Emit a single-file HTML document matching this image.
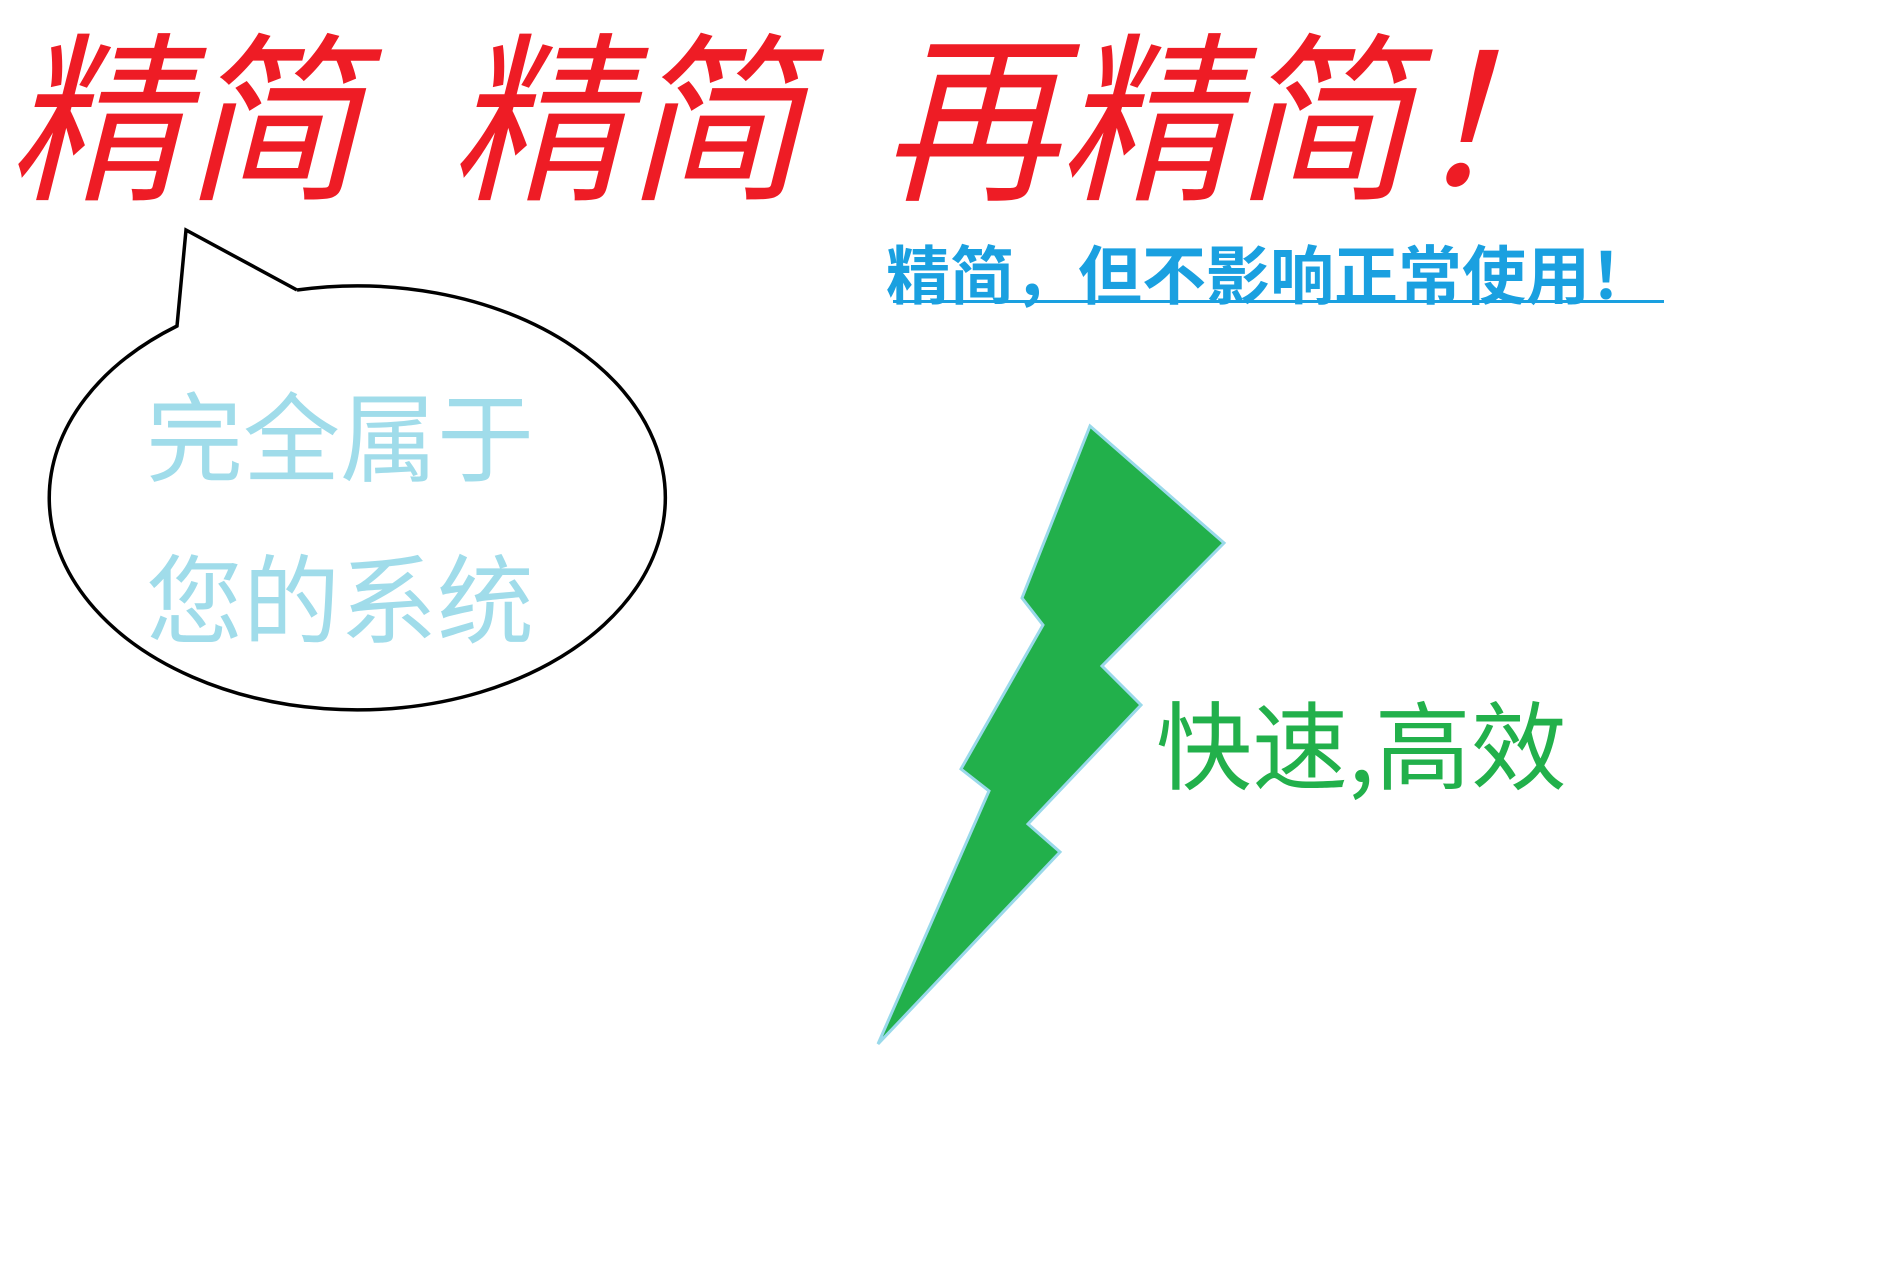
<!DOCTYPE html>
<html><head><meta charset="utf-8"><style>
body{margin:0;width:1900px;height:1267px;background:#fff;position:relative;overflow:hidden;font-family:"Liberation Sans","Noto Sans CJK SC",sans-serif}
.r{position:absolute;top:8px;color:#ee1c25;font-size:182px;font-weight:normal;line-height:200px;white-space:nowrap;transform:skewX(-14deg) scaleX(0.97);transform-origin:0 100%;letter-spacing:0px;font-family:"Noto Sans CJK SC",sans-serif}
.t{position:absolute;white-space:nowrap;font-family:"Noto Sans CJK SC",sans-serif}
</style></head><body>
<div class="r" style="left:2px">精简</div>
<div class="r" style="left:444px">精简</div>
<div class="r" style="left:876px">再精简！</div>
<div class="t" style="left:886px;top:232px;font-size:64px;line-height:80px;font-weight:bold;color:#1aa0e0;letter-spacing:0px">精简，但不影响正常使用！</div>
<div style="position:absolute;left:893px;top:300px;width:771px;height:3px;background:#1aa0e0"></div>
<svg width="1900" height="1267" style="position:absolute;left:0;top:0">
<path d="M297 290 L186 230 L177 326 A308 212 0 1 0 297 290" fill="none" stroke="#000" stroke-width="3.5" stroke-linejoin="miter"/>
<polygon points="1090,426 1224,543 1102,666 1141,705 1028,824 1060,852 878,1044 989,791 961,769 1043,625 1022,598" fill="#22b04b" stroke="#99d9ea" stroke-width="3"/>
</svg>
<div class="t" style="left:146px;top:372px;font-size:97px;line-height:120px;color:#a0dcea">完全属于</div>
<div class="t" style="left:146px;top:534px;font-size:97px;line-height:120px;color:#a0dcea">您的系统</div>
<div class="t" style="left:1156px;top:681px;font-size:96px;line-height:120px;color:#22b04b">快速,高效</div>
</body></html>
